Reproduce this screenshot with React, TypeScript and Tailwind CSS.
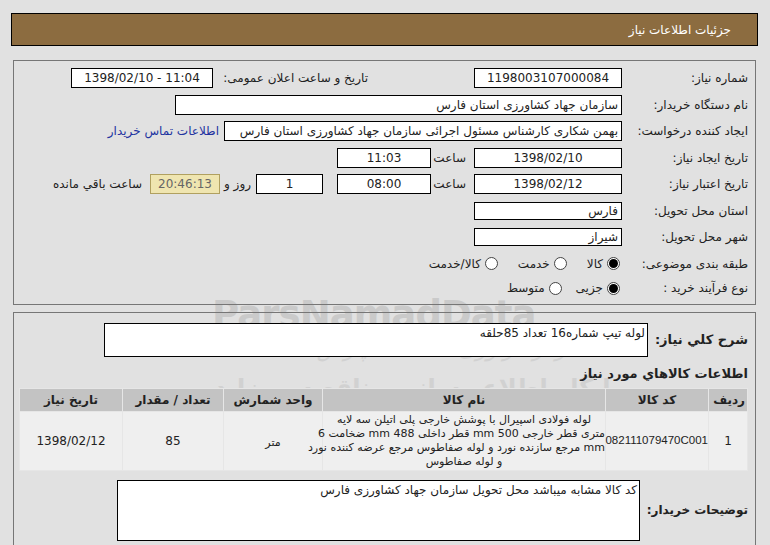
import type { ReactNode } from "react";

const font = { fontFamily: '"DejaVu Sans", Tahoma, sans-serif' };

function Box({
  w,
  children,
  center,
  ltr,
  h = "h-[20px]",
}: {
  w: string;
  children?: ReactNode;
  center?: boolean;
  ltr?: boolean;
  h?: string;
}) {
  return (
    <div
      dir={ltr ? "ltr" : undefined}
      className={`${w} ${h} shrink-0 border border-black bg-white px-[3px] text-[12px] leading-[18px] text-[#222] whitespace-nowrap overflow-hidden ${
        center ? "text-center" : "text-right"
      }`}
    >
      {children}
    </div>
  );
}

function Label({ children, w = "w-[126px]" }: { children: ReactNode; w?: string }) {
  return (
    <div className={`${w} shrink-0 text-[12px] text-[#222] whitespace-nowrap`}>
      {children}
    </div>
  );
}

function Radio({ checked, label }: { checked?: boolean; label: string }) {
  return (
    <div className="flex items-center gap-[4px] text-[12px] text-[#222]">
      <span className="flex h-[13px] w-[13px] items-center justify-center rounded-full border border-[#444] bg-white">
        {checked && <span className="h-[9px] w-[9px] rounded-full bg-black" />}
      </span>
      <span>{label}</span>
    </div>
  );
}

function Row({ children }: { children: ReactNode }) {
  return <div className="flex h-[26.5px] items-center">{children}</div>;
}

export default function App() {
  return (
    <div
      dir="rtl"
      style={font}
      className="relative h-[545px] w-[770px] overflow-hidden bg-[#e1e1e1] pt-[13px]"
    >
      {/* watermark, behind the content */}
      <div className="pointer-events-none absolute inset-0" dir="ltr">
        <div className="absolute top-[287px] left-[212px] text-[37px] font-bold tracking-tight text-[#b4b4b4] opacity-50">
          ParsNamadData
        </div>
        <div className="absolute top-[332px] left-[205px] text-[22px] italic text-[#bbb] opacity-40" dir="rtl">
          مرکز فراوری اطلاعات پارس نماد داده ها
        </div>
        <div className="absolute top-[370px] left-[200px] text-[24px] font-bold text-[#bbb] opacity-40" dir="rtl">
          پایگاه اطلاع رسانی مناقصه ومزایده
        </div>
      </div>

      {/* header */}
      <div className="relative mr-[12px] ml-[11px] flex h-[33px] items-center border border-black bg-[#8c6c40] pr-[26px] text-[12px] text-white">
        جزئیات اطلاعات نیاز
      </div>

      {/* main info */}
      <div className="relative mt-[14px] mr-[14px] ml-[13px] h-[245px] border border-[#767676] pr-[7px] pt-[4px]">
        <Row>
          <Label>شماره نیاز:</Label>
          <Box w="w-[148px]" center>
            1198003107000084
          </Box>
          <div className="w-[106px] shrink-0" />
          <Label w="w-[155px]">تاریخ و ساعت اعلان عمومی:</Label>
          <Box w="w-[142px]" center ltr>
            1398/02/10 - 11:04
          </Box>
        </Row>
        <Row>
          <Label>نام دستگاه خریدار:</Label>
          <Box w="w-[447px]">سازمان جهاد کشاورزی استان فارس</Box>
        </Row>
        <Row>
          <Label>ایجاد کننده درخواست:</Label>
          <Box w="w-[398px]">
            بهمن شکاری کارشناس مسئول اجرائی سازمان جهاد کشاورزی استان فارس
          </Box>
          <a className="mr-[5px] text-[12px] text-[#2233a0] whitespace-nowrap">
            اطلاعات تماس خریدار
          </a>
        </Row>
        <Row>
          <Label>تاریخ ایجاد نیاز:</Label>
          <Box w="w-[148px]" center>
            1398/02/10
          </Box>
          <div className="mr-[8px] w-[35px] shrink-0 text-[12px] text-[#222]">ساعت</div>
          <Box w="w-[94px]" center>
            11:03
          </Box>
        </Row>
        <Row>
          <Label>تاریخ اعتبار نیاز:</Label>
          <Box w="w-[148px]" center>
            1398/02/12
          </Box>
          <div className="mr-[8px] w-[35px] shrink-0 text-[12px] text-[#222]">ساعت</div>
          <Box w="w-[94px]" center>
            08:00
          </Box>
          <div className="w-[14px] shrink-0" />
          <Box w="w-[67px]" center>
            1
          </Box>
          <div className="mr-[5px] ml-[4px] text-[12px] text-[#222] whitespace-nowrap">روز و</div>
          <div className="h-[20px] w-[70px] shrink-0 border border-[#b0a060] bg-[#efe5b0] text-center text-[12px] leading-[18px] text-[#666]">
            20:46:13
          </div>
          <div className="mr-[8px] text-[12px] text-[#222] whitespace-nowrap">ساعت باقي مانده</div>
        </Row>
        <Row>
          <Label>استان محل تحویل:</Label>
          <Box w="w-[148px]" h="h-[18px]">
            <span className="relative top-[-1px]">فارس</span>
          </Box>
        </Row>
        <Row>
          <Label>شهر محل تحویل:</Label>
          <Box w="w-[148px]" h="h-[18px]">
            <span className="relative top-[-1px]">شیراز</span>
          </Box>
        </Row>
        <Row>
          <Label w="w-[128px]">طبقه بندی موضوعی:</Label>
          <div className="flex items-center gap-[20px]">
            <Radio checked label="کالا" />
            <Radio label="خدمت" />
            <Radio label="کالا/خدمت" />
          </div>
        </Row>
        <div className="flex h-[22px] items-center">
          <Label w="w-[128px]">نوع فرآیند خرید :</Label>
          <div className="flex items-center gap-[14px]">
            <Radio checked label="جزیی" />
            <Radio label="متوسط" />
          </div>
        </div>
      </div>

      {/* details */}
      <div className="relative mt-[7px] mr-[14px] ml-[13px] h-[300px] border border-[#767676] pt-[10px] pr-[7px]">
        <div className="flex items-center">
          <div className="w-[100px] shrink-0 text-[13px] font-bold text-[#222] whitespace-nowrap">شرح کلي نیاز:</div>
          <div className="h-[34px] w-[544px] border border-black bg-white px-[2px] text-[12px] leading-[18px] text-[#222]">
            لوله تیپ شماره16 تعداد 85حلقه
          </div>
        </div>

        <div className="mt-[7px] text-[13px] font-bold text-[#222]">اطلاعات کالاهاي مورد نياز</div>

        <table className="mt-[4px] w-[722px] table-fixed border-separate border-spacing-[1px] bg-[#e6e6e6] text-[12px] text-[#222]">
          <colgroup>
            <col className="w-[38px]" />
            <col className="w-[102px]" />
            <col className="w-[282px]" />
            <col className="w-[98px]" />
            <col className="w-[100px]" />
            <col className="w-[102px]" />
          </colgroup>
          <thead>
            <tr className="h-[22px] bg-[#c3c3c3] font-bold">
              <th className="text-right pr-[2px]">ردیف</th>
              <th>کد کالا</th>
              <th>نام کالا</th>
              <th>واحد شمارش</th>
              <th>تعداد / مقدار</th>
              <th>تاریخ نیاز</th>
            </tr>
          </thead>
          <tbody>
            <tr className="h-[58px] bg-[#efefef]">
              <td className="text-center">1</td>
              <td
                className="text-center text-[11.5px]"
                style={{ fontFamily: '"Liberation Sans", Arial, sans-serif' }}
              >
                082111079470C001
              </td>
              <td className="text-center text-[11px] leading-[14px] whitespace-nowrap">
                لوله فولادی اسپیرال با پوشش خارجی پلی اتیلن سه لایه
                <br />
                متری قطر خارجی 500 mm قطر داخلی 488 mm ضخامت 6
                <br />
                mm مرجع سازنده نورد و لوله صفاطوس مرجع عرضه کننده نورد
                <br />
                و لوله صفاطوس
              </td>
              <td className="pt-[6px] text-center text-[11px]">متر</td>
              <td className="text-center">85</td>
              <td className="text-center">1398/02/12</td>
            </tr>
          </tbody>
        </table>

        <div className="mt-[9px] flex items-center">
          <div className="w-[108px] shrink-0 text-[12px] font-bold text-[#222] whitespace-nowrap">توضیحات خریدار:</div>
          <div className="h-[61px] w-[523px] border border-black bg-white px-[2px] text-[12px] leading-[18px] text-[#222]">
            کد کالا مشابه میباشد محل تحویل سازمان جهاد کشاورزی فارس
          </div>
        </div>
      </div>
    </div>
  );
}
